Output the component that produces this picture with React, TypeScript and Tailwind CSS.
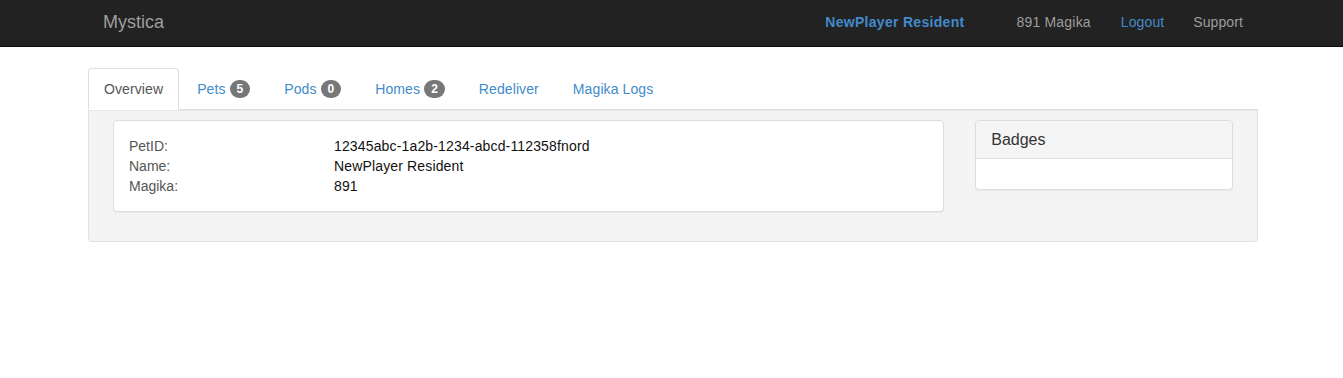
const tabs = [
  { label: "Overview", active: true },
  { label: "Pets", badge: "5" },
  { label: "Pods", badge: "0" },
  { label: "Homes", badge: "2" },
  { label: "Redeliver" },
  { label: "Magika Logs" },
];

const details = [
  ["PetID:", "12345abc-1a2b-1234-abcd-112358fnord"],
  ["Name:", "NewPlayer Resident"],
  ["Magika:", "891"],
];

export default function App() {
  return (
    <div className="min-h-[378px] bg-white text-[14px] leading-[20px] text-[#333] font-['Liberation_Sans',Arial,sans-serif]">
      {/* navbar */}
      <nav className="h-[47px] border-b border-[#080808] bg-[#222]">
        <div className="ml-[88px] flex h-full w-[1170px] items-center px-[15px] pb-[3px]">
          <a className="text-[18px] leading-[20px] text-[#9d9d9d]">Mystica</a>
          <div className="ml-auto flex items-center">
            <span className="mr-[52px] text-[14px] font-bold tracking-[0.3px] text-[#428bca]">
              NewPlayer Resident
            </span>
            <span className="tracking-[0.2px] text-[#9d9d9d]">891 Magika</span>
            <a className="ml-[30px] tracking-[0.1px] text-[#428bca]">Logout</a>
            <a className="ml-[29px] tracking-[0.1px] text-[#9d9d9d]">Support</a>
          </div>
        </div>
      </nav>

      <div className="ml-[88px] mt-[21px] w-[1170px]">
        {/* tabs */}
        <ul className="flex border-b border-[#ddd]">
          {tabs.map((t) => (
            <li key={t.label} className="-mb-px mr-[2px]">
              <a
                className={
                  t.active
                    ? "flex items-center rounded-t-[4px] border border-[#ddd] border-b-white bg-white px-[15px] py-[10px] text-[#555]"
                    : "flex items-center rounded-t-[4px] border border-transparent px-[15px] py-[10px] text-[#428bca]"
                }
              >
                <span className="tracking-[0.1px]">{t.label}</span>
                {t.badge && (
                  <span className="ml-[4px] inline-block min-w-[10px] rounded-[10px] bg-[#777] px-[7px] py-[3px] text-center text-[12px] font-bold leading-[12px] text-white">
                    {t.badge}
                  </span>
                )}
              </a>
            </li>
          ))}
        </ul>

        {/* tab content well */}
        <div className="flex gap-[31px] rounded-b-[4px] border border-t-0 border-[#e3e3e3] bg-[#f4f4f4] px-[24px] pb-[29px] pt-[10px] shadow-[inset_0_1px_1px_rgba(0,0,0,0.05)]">
          <div className="w-[832px] rounded-[4px] border border-[#ddd] bg-white px-[15px] py-[15px] shadow-[0_1px_1px_rgba(0,0,0,0.05)]">
            {details.map(([k, v]) => (
              <div key={k} className="flex">
                <span className="w-[205px] text-[#555]">{k}</span>
                <span className="tracking-[0.15px] text-[#111]">{v}</span>
              </div>
            ))}
          </div>

          <div className="h-[70px] w-[258px] rounded-[4px] border border-[#ddd] bg-white shadow-[0_1px_1px_rgba(0,0,0,0.05)]">
            <div className="rounded-t-[3px] border-b border-[#ddd] bg-[#f5f5f5] px-[15px] py-[10px] text-[16px] leading-[17px] text-[#333]">
              Badges
            </div>
            <div className="h-[30px]" />
          </div>
        </div>
      </div>
    </div>
  );
}
